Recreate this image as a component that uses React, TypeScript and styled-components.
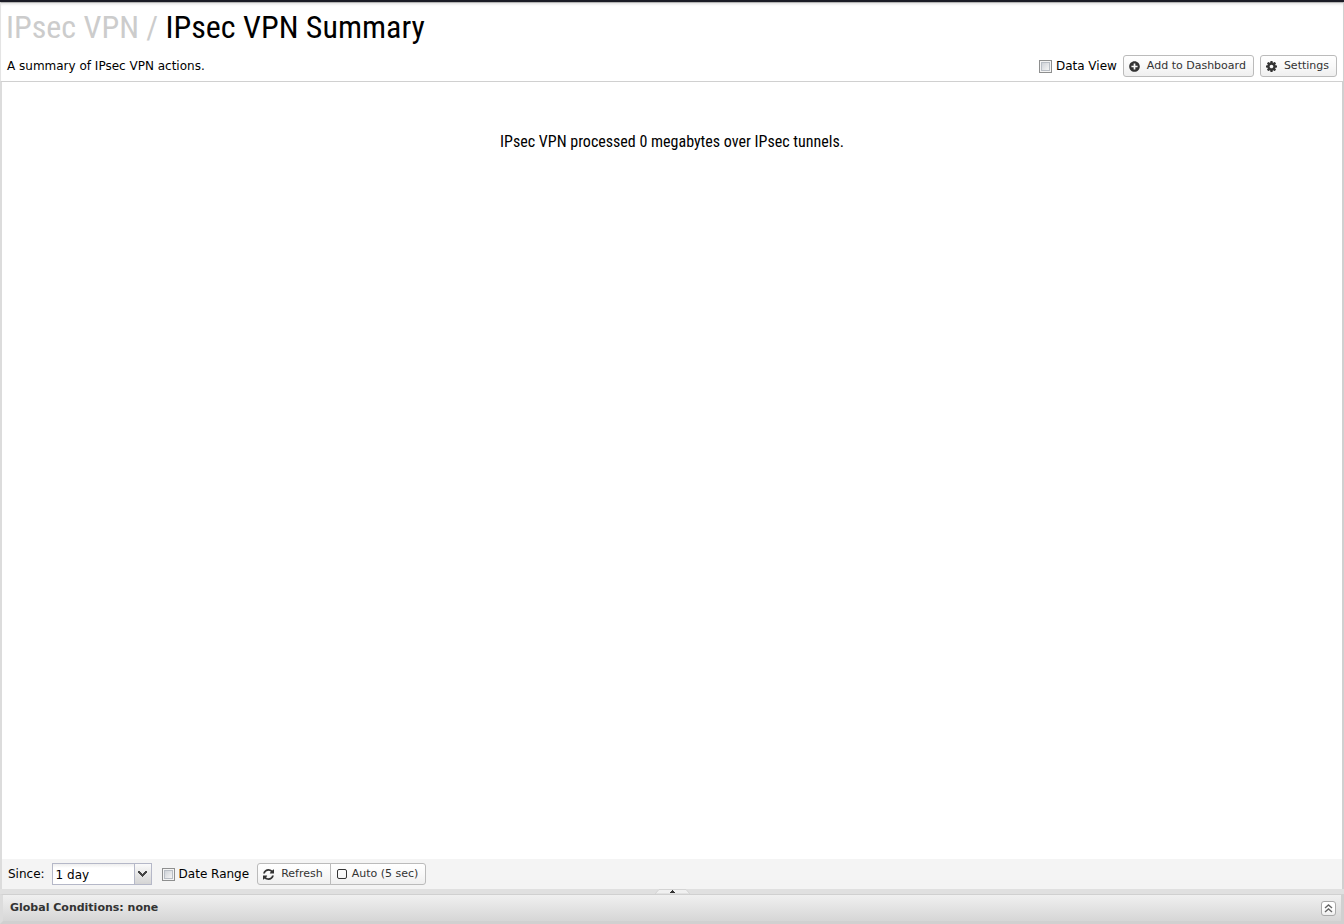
import React from 'react';
import styled, { createGlobalStyle, css } from 'styled-components';
import { FaPlusCircle } from 'react-icons/fa';

const GlobalStyle = createGlobalStyle`
  * { box-sizing: border-box; }
  body {
    margin: 0;
    background: #fff;
    color: #000;
    font-family: "DejaVu Sans", Verdana, sans-serif;
    font-size: 12px;
    line-height: 16px;
  }
`;

const Page = styled.div`
  display: flex;
  flex-direction: column;
  min-height: 100vh;
  border-top: 2px solid #1b1c26;
`;

const Header = styled.header`
  display: flex;
  flex-direction: column;
  height: 80px;
  padding: 4px 6px 4px 5px;
  border: 1px solid #d0d0d0;
  border-top-color: #b4b4b4;
  border-left-color: #e4e4e4;
  box-shadow: inset 0 3px 3px -2px #ddd;
`;

const Title = styled.h1`
  margin: 0;
  font: 400 32px/40px "Roboto Condensed", Roboto, sans-serif;
`;

const Parent = styled.span`
  color: #ccc;
`;

const HeaderRow = styled.div`
  display: flex;
  align-items: center;
  justify-content: space-between;
  margin-top: auto;
`;

const Description = styled.p`
  margin: 0;
  padding-left: 1px;
`;

const Actions = styled.div`
  display: flex;
  align-items: center;
  gap: 6px;
`;

const CheckLabel = styled.label`
  display: flex;
  align-items: center;
  gap: 4px;
`;

const CheckBox = styled.input`
  appearance: none;
  width: 13px;
  height: 13px;
  margin: 1px 0 0;
  border: 1px solid #8e8f8f;
  background: linear-gradient(135deg, #c4c9d0, #f4f4f4 80%);
  box-shadow: inset 0 0 0 1px #f4f4f4, inset 0 0 0 2px #b9bec5;
`;

const buttonFace = css`
  display: flex;
  align-items: center;
  height: 22px;
  padding: 0 7px 1px 5px;
  border: 1px solid #bbb;
  background: linear-gradient(#fff, #f9f9f9 48%, #efefef);
  color: #333;
  font: 11px/16px "DejaVu Sans", Verdana, sans-serif;
  white-space: nowrap;
`;

const Button = styled.button`
  ${buttonFace}
  gap: 7px;
  border-radius: 3px;

  svg {
    width: 11px;
    height: 11px;
    margin-top: 1px;
  }
`;

const ButtonGroup = styled.div`
  display: flex;

  ${Button}:first-child {
    border-radius: 3px 0 0 3px;
  }
  ${Button} + ${Button} {
    margin-left: -1px;
    gap: 5px;
    border-radius: 0 3px 3px 0;
  }
`;

const Report = styled.main`
  flex: 1;
  padding: 50px 0;
  border: solid #d0d0d0;
  border-width: 0 2px 0 2px;
  border-left-color: #dcdcdc;
`;

const Summary = styled.p`
  margin: 0;
  font: 400 16px/20px "Roboto Condensed", Roboto, sans-serif;
  text-align: center;
`;

const Toolbar = styled.div`
  display: flex;
  align-items: center;
  height: 30px;
  gap: 8px;
  padding: 0 6px;
  border: solid #d0d0d0;
  border-width: 0 2px 0 2px;
  border-left-color: #dcdcdc;
  background: #f4f4f4;
`;

const Since = styled.label`
  display: flex;
  align-items: center;
  gap: 7px;
  margin-right: 2px;
`;

const SelectBox = styled.span`
  display: flex;
  position: relative;
  width: 100px;
  height: 22px;
  border: 1px solid #b5b8c8;
  background: linear-gradient(#eee, #fff 4px);
`;

const Select = styled.select`
  appearance: none;
  width: 100%;
  padding: 1px 20px 0 3px;
  border: 0;
  background: none;
  color: #000;
  font: 12px/18px "DejaVu Sans", Verdana, sans-serif;
`;

const Trigger = styled.span`
  display: flex;
  align-items: center;
  justify-content: center;
  position: absolute;
  inset: 0 0 0 auto;
  width: 17px;
  border-left: 1px solid #b5b8c8;
  background: linear-gradient(#fafafa, #d4d4d4);
  pointer-events: none;
`;

const Splitter = styled.div`
  display: flex;
  justify-content: center;
  height: 5px;
  background: #e0e0e0;

  svg { display: block; }
`;

const Conditions = styled.footer`
  display: flex;
  align-items: center;
  justify-content: space-between;
  height: 30px;
  padding: 0 5px 0 7px;
  border: solid #d0d0d0;
  border-width: 1px 3px 3px 3px;
  border-left-color: #dcdcdc;
  background: linear-gradient(#f0f0f0, #d6d6d6);
`;

const ConditionsTitle = styled.h2`
  margin: 0;
  color: #333;
  font: 700 11px/16px "DejaVu Sans", Verdana, sans-serif;
`;

const Expand = styled.button`
  display: flex;
  align-items: center;
  justify-content: center;
  width: 15px;
  height: 15px;
  padding: 0;
  border: 1px solid #aaa;
  border-radius: 3px;
  background: linear-gradient(#fff 50%, #eee);
`;

const CogIcon = () => (
  <svg viewBox="0 128 1536 1536" fill="currentColor">
    <path d="M1024 896q0-106-75-181t-181-75-181 75-75 181 75 181 181 75 181-75 75-181zm512-109v222q0 12-8 23t-20 13l-185 28q-19 54-39 91 35 50 107 138 10 12 10 25t-9 23q-27 37-99 108t-94 71q-12 0-26-9l-138-108q-44 23-91 38-16 136-29 186-7 28-36 28h-222q-14 0-24.500-8.500t-11.500-21.500l-28-184q-49-16-90-37l-141 107q-10 9-25 9-14 0-25-11-126-114-165-168-7-10-7-23 0-12 8-23 15-21 51-66.500t54-70.500q-27-50-41-99l-183-27q-13-2-21-12.500t-8-23.500v-222q0-12 8-23t19-13l186-28q14-46 39-92-40-57-107-138-10-12-10-24 0-10 9-23 26-36 98.500-107.500t94.500-71.500q13 0 26 10l138 107q44-23 91-38 16-136 29-186 7-28 36-28h222q14 0 24.500 8.500t11.500 21.500l28 184q49 16 90 37l142-107q9-9 24-9 13 0 25 10 129 119 165 170 7 8 7 22 0 12-8 23-15 21-51 66.500t-54 70.500q26 50 41 98l183 28q13 2 21 12.500t8 23.500z" />
  </svg>
);

const RefreshIcon = () => (
  <svg viewBox="0 128 1536 1536" fill="currentColor">
    <path d="M1511 1056q0 5-1 7-64 268-268 434.500t-478 166.500q-146 0-282.500-55t-243.500-157l-129 129q-19 19-45 19t-45-19-19-45v-448q0-26 19-45t45-19h448q26 0 45 19t19 45-19 45l-137 137q71 66 161 102t187 36q134 0 250-65t186-179q11-17 53-117 8-23 30-23h192q13 0 22.500 9.500t9.500 22.500zm25-800v448q0 26-19 45t-45 19h-448q-26 0-45-19t-19-45 19-45l138-138q-148-137-349-137-134 0-250 65t-186 179q-11 17-53 117-8 23-30 23h-199q-13 0-22.500-9.500t-9.500-22.500v-7q65-268 270-434.500t480-166.500q146 0 284 55.500t245 156.500l130-129q19-19 45-19t45 19 19 45z" />
  </svg>
);

export default function App() {
  return (
    <Page>
      <GlobalStyle />
      <Header>
        <Title>
          <Parent>IPsec VPN /</Parent> IPsec VPN Summary
        </Title>
        <HeaderRow>
          <Description>A summary of IPsec VPN actions.</Description>
          <Actions>
            <CheckLabel>
              <CheckBox type="checkbox" />
              Data View
            </CheckLabel>
            <Button type="button"><FaPlusCircle />Add to Dashboard</Button>
            <Button type="button"><CogIcon />Settings</Button>
          </Actions>
        </HeaderRow>
      </Header>
      <Report>
        <Summary>IPsec VPN processed 0 megabytes over IPsec tunnels.</Summary>
      </Report>
      <Toolbar>
        <Since>
          Since:
          <SelectBox>
            <Select defaultValue="1 day">
              <option>1 day</option>
            </Select>
            <Trigger>
              <svg width="9" height="6" viewBox="0 0 9 6">
                <path d="M0 0h2v1h1v1h1v1h1V2h1V1h1V0h2v2H8v1H7v1H6v1H5v1H4V5H3V4H2V3H1V2H0z" fill="#444" />
              </svg>
            </Trigger>
          </SelectBox>
        </Since>
        <CheckLabel>
          <CheckBox type="checkbox" />
          Date Range
        </CheckLabel>
        <ButtonGroup>
          <Button type="button"><RefreshIcon />Refresh</Button>
          <Button type="button">
            <svg viewBox="0 0 11 11">
              <rect x="1.500" y="0.500" width="9" height="9" rx="1.500" fill="none" stroke="#333" />
            </svg>
            Auto (5 sec)
          </Button>
        </ButtonGroup>
      </Toolbar>
      <Splitter>
        <svg width="35" height="5" viewBox="0 0 35 5">
          <path d="M0 5L4 .5H31L35 5z" fill="#f0f0f0" stroke="#d4d4d4" />
          <path d="M15 4V3h1V2h1V1h1v1h1v1h1v1z" fill="#333" />
        </svg>
      </Splitter>
      <Conditions>
        <ConditionsTitle>Global Conditions: none</ConditionsTitle>
        <Expand type="button" aria-label="Expand">
          <svg width="9" height="9" viewBox="0 0 9 9" fill="none" stroke="#666" strokeWidth="1.400">
            <path d="M1 4L4.500 1 8 4M1 8l3.500-3L8 8" />
          </svg>
        </Expand>
      </Conditions>
    </Page>
  );
}
